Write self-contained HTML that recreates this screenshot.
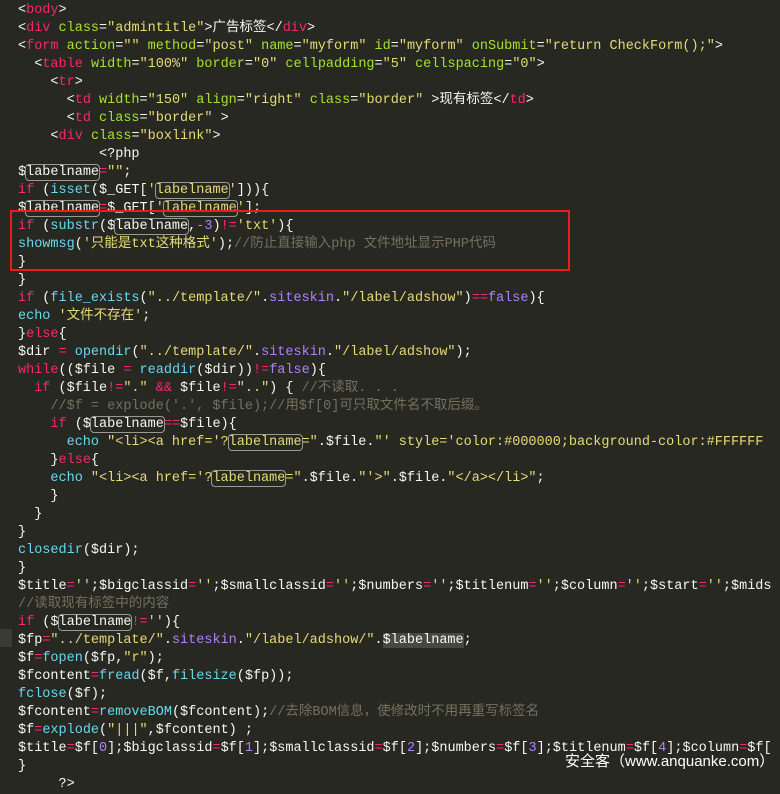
<!DOCTYPE html>
<html><head><meta charset="utf-8">
<style>
html,body{margin:0;padding:0;background:#272822;width:780px;height:782px;overflow:hidden;}
pre{margin:0;position:absolute;left:18px;top:2px;font-family:"Liberation Mono","Noto Sans CJK SC",monospace;font-size:13.5px;line-height:18px;color:#f8f8f2;white-space:pre;}
.t{color:#f92672}.a{color:#a6e22e}.s{color:#e6db74}.f{color:#66d9ef}.c{color:#75715e}.n{color:#ae81ff}
.b{outline:1px solid #9a9a90;border-radius:3px;outline-offset:0}
#red{position:absolute;left:10px;top:210px;width:556px;height:57px;border:2px solid #f01a1a;}
#cur{position:absolute;left:0;top:629px;width:12px;height:18px;background:#3a3b34}
#wm{position:absolute;left:565px;top:753px;color:#fff;font-family:"Liberation Sans","Noto Sans CJK SC",sans-serif;font-size:15px;line-height:18px}
</style></head><body>
<div id="cur"></div>
<pre>&lt;<span class="t">body</span>&gt;
&lt;<span class="t">div</span> <span class="a">class</span>=<span class="s">"admintitle"</span>&gt;广告标签&lt;/<span class="t">div</span>&gt;
&lt;<span class="t">form</span> <span class="a">action</span>=<span class="s">""</span> <span class="a">method</span>=<span class="s">"post"</span> <span class="a">name</span>=<span class="s">"myform"</span> <span class="a">id</span>=<span class="s">"myform"</span> <span class="a">onSubmit</span>=<span class="s">"return CheckForm();"</span>&gt;
  &lt;<span class="t">table</span> <span class="a">width</span>=<span class="s">"100%"</span> <span class="a">border</span>=<span class="s">"0"</span> <span class="a">cellpadding</span>=<span class="s">"5"</span> <span class="a">cellspacing</span>=<span class="s">"0"</span>&gt;
    &lt;<span class="t">tr</span>&gt;
      &lt;<span class="t">td</span> <span class="a">width</span>=<span class="s">"150"</span> <span class="a">align</span>=<span class="s">"right"</span> <span class="a">class</span>=<span class="s">"border"</span> &gt;现有标签&lt;/<span class="t">td</span>&gt;
      &lt;<span class="t">td</span> <span class="a">class</span>=<span class="s">"border"</span> &gt;
    &lt;<span class="t">div</span> <span class="a">class</span>=<span class="s">"boxlink"</span>&gt;
          &lt;?php
$<span class="b">labelname</span><span class="t">=</span><span class="s">""</span>;
<span class="t">if</span> (<span class="f">isset</span>($_GET[<span class="s">'<span class="b">labelname</span>'</span>])){
$<span class="b">labelname</span><span class="t">=</span>$_GET[<span class="s">'<span class="b">labelname</span>'</span>];
<span class="t">if</span> (<span class="f">substr</span>($<span class="b">labelname</span>,<span class="n">-3</span>)<span class="t">!=</span><span class="s">'txt'</span>){
<span class="f">showmsg</span>(<span class="s">'只能是txt这种格式'</span>);<span class="c">//防止直接输入php 文件地址显示PHP代码</span>
}
}
<span class="t">if</span> (<span class="f">file_exists</span>(<span class="s">"../template/"</span>.<span class="n">siteskin</span>.<span class="s">"/label/adshow"</span>)<span class="t">==</span><span class="n">false</span>){
<span class="f">echo</span> <span class="s">'文件不存在'</span>;
}<span class="t">else</span>{
$dir <span class="t">=</span> <span class="f">opendir</span>(<span class="s">"../template/"</span>.<span class="n">siteskin</span>.<span class="s">"/label/adshow"</span>);
<span class="t">while</span>(($file <span class="t">=</span> <span class="f">readdir</span>($dir))<span class="t">!=</span><span class="n">false</span>){
  <span class="t">if</span> ($file<span class="t">!=</span><span class="s">"."</span> <span class="t">&amp;&amp;</span> $file<span class="t">!=</span><span class="s">".."</span>) { <span class="c">//不读取. . .</span>
    <span class="c">//$f = explode('.', $file);//用$f[0]可只取文件名不取后缀。</span>
    <span class="t">if</span> ($<span class="b">labelname</span><span class="t">==</span>$file){
      <span class="f">echo</span> <span class="s">"&lt;li&gt;&lt;a href='?<span class="b">labelname</span>="</span>.$file.<span class="s">"' style='color:#000000;background-color:#FFFFFF</span>
    }<span class="t">else</span>{
    <span class="f">echo</span> <span class="s">"&lt;li&gt;&lt;a href='?<span class="b">labelname</span>="</span>.$file.<span class="s">"'&gt;"</span>.$file.<span class="s">"&lt;/a&gt;&lt;/li&gt;"</span>;
    }
  }
}
<span class="f">closedir</span>($dir);
}
$title<span class="t">=</span><span class="s">''</span>;$bigclassid<span class="t">=</span><span class="s">''</span>;$smallclassid<span class="t">=</span><span class="s">''</span>;$numbers<span class="t">=</span><span class="s">''</span>;$titlenum<span class="t">=</span><span class="s">''</span>;$column<span class="t">=</span><span class="s">''</span>;$start<span class="t">=</span><span class="s">''</span>;$mids
<span class="c">//读取现有标签中的内容</span>
<span class="t">if</span> ($<span class="b">labelname</span><span class="t">!=</span><span class="s">''</span>){
$fp<span class="t">=</span><span class="s">"../template/"</span>.<span class="n">siteskin</span>.<span class="s">"/label/adshow/"</span>.<span style="background:#49483e">$labelname</span>;
$f<span class="t">=</span><span class="f">fopen</span>($fp,<span class="s">"r"</span>);
$fcontent<span class="t">=</span><span class="f">fread</span>($f,<span class="f">filesize</span>($fp));
<span class="f">fclose</span>($f);
$fcontent<span class="t">=</span><span class="f">removeBOM</span>($fcontent);<span class="c">//去除BOM信息，使修改时不用再重写标签名</span>
$f<span class="t">=</span><span class="f">explode</span>(<span class="s">"|||"</span>,$fcontent) ;
$title<span class="t">=</span>$f[<span class="n">0</span>];$bigclassid<span class="t">=</span>$f[<span class="n">1</span>];$smallclassid<span class="t">=</span>$f[<span class="n">2</span>];$numbers<span class="t">=</span>$f[<span class="n">3</span>];$titlenum<span class="t">=</span>$f[<span class="n">4</span>];$column<span class="t">=</span>$f[
}
     ?&gt;</pre>
<div id="red"></div>
<div id="wm">安全客（www.anquanke.com）</div>
</body></html>
